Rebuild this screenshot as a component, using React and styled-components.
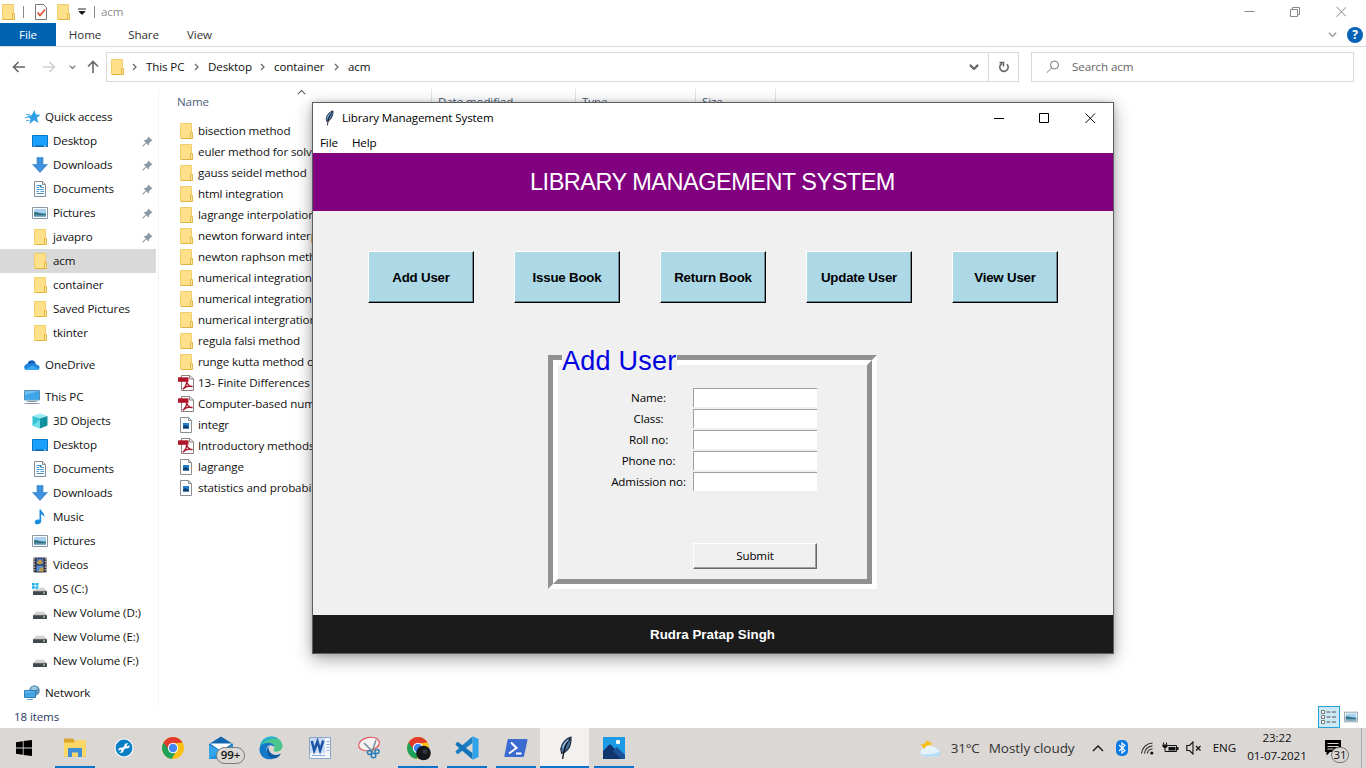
import React from "react";
import styled, { createGlobalStyle } from "styled-components";

const Global = createGlobalStyle`
  * { box-sizing: border-box; }
  body {
    margin: 0;
    overflow: hidden;
    background: #fff;
    font-family: "Open Sans", "Noto Sans", sans-serif;
    font-size: 11.6px;
    letter-spacing: -0.12px;
    color: #111;
  }
  svg { display: block; flex: none; }
`;

/* ---------- icons ---------- */

const Folder = () => (
  <svg width="14" height="16" viewBox="-1 0 14 16">
    <path d="M.5 .5h11v15H.5z" fill="#ffe08a" stroke="#f0cf6a" />
    <path d="M10.5 9.5h2v6h-2z" fill="#ffe596" stroke="#e3b94e" />
    <path d="M1 15.5h11.5" stroke="#dfb545" />
  </svg>
);
const Star = () => (
  <svg width="16" height="16" viewBox="-1 0 16 16">
    <path d="M9.500 1l1.300 4.600 4.700.2-3.700 2.900 1.600 5.200-4.400-2.600L4.500 15l1-5L2 7l4.600-.8z" fill="#2f9fe8" />
    <path d="M1 5.500h4M0 8.500h3M1 11.500h3.500" stroke="#5ab6f0" />
  </svg>
);
const Desk = () => (
  <svg width="16" height="16" viewBox="0 0 16 16">
    <path d="M.5 2.500h15v11H.5z" fill="#18a0fb" stroke="#0a78c8" />
    <path d="M1 13h14" stroke="#0b5fa8" />
    <path d="M2 13h1M12 13h2" stroke="#d6efff" />
  </svg>
);
const Down = () => (
  <svg width="16" height="16" viewBox="0 0 16 16">
    <path d="M5 .5h6v7h4.500L8 15.500.5 7.500H5z" fill="#3f92dc" stroke="#2f7fc8" strokeWidth=".6" />
  </svg>
);
const Doc = () => (
  <svg width="16" height="16" viewBox="0 0 16 16">
    <path d="M2.500 .5h8l3 3v12h-11z" fill="#fff" stroke="#868c92" />
    <path d="M10.500 .5v3h3" fill="none" stroke="#868c92" />
    <path d="M4.500 4.500h3M4.500 6.500h2.500M8.500 6.500h3.500M4.500 8.500h7.500M4.500 10.500h2.500M8.500 10.500h3.500M4.500 12.500h7.500" stroke="#4a9ad4" />
    <path d="M7.500 4h2v2h-2z" fill="#2b78b8" />
  </svg>
);
const Pic = ({ size = 16 }) => (
  <svg width={size} height={size} viewBox="0 0 16 16">
    <path d="M.5 2.500h15v11H.5z" fill="#fff" stroke="#8c969e" />
    <path d="M2 4h12v8H2z" fill="#a9d3f2" />
    <path d="M2 7.500c3-1.500 5 1.500 12 1V12H2z" fill="#38748a" />
    <path d="M2 10.500h12V12H2z" fill="#7cb1ca" />
  </svg>
);
const Cloud = () => (
  <svg width="16" height="16" viewBox="0 0 16 16">
    <path d="M3.500 7a4.300 4.300 0 0 1 8.200-1L7 12.500H3A2.800 2.800 0 0 1 3.500 7z" fill="#0f5cb8" />
    <path d="M7 6.500c3-.8 5.300 0 6 1.600a2.400 2.400 0 0 1 .3 4.900H3.200C1.500 13 .2 12 .2 10.400 0 8.500 2 7 4 7z" fill="#1c84dc" />
    <path d="M1 12l7.500-3.500L15 12c-.5.8-1 1-2 1H3c-1 0-1.500-.4-2-1z" fill="#3aa6f0" />
  </svg>
);
const PC = () => (
  <svg width="16" height="16" viewBox="0 0 16 16">
    <path d="M.5 1.500h15v9.500H.5z" fill="#6cc0f5" stroke="#5a8fb4" />
    <path d="M1 10.500V6L15 2v8.500z" fill="#3fa6ea" />
    <path d="M3 12.500h10M.5 14.500h15" stroke="#8b98a2" />
  </svg>
);
const Cube = () => (
  <svg width="16" height="16" viewBox="0 0 16 16">
    <path d="M8 .5L15.500 3 8 5.500.5 3z" fill="#9be8f0" />
    <path d="M.5 3L8 5.500v10L.5 12.500z" fill="#35c2d4" />
    <path d="M8 5.500L15.500 3v9.500L8 15.500z" fill="#12929f" />
    <path d="M.5 12.500L8 7v8.500z" fill="#6fdde8" />
  </svg>
);
const Note = () => (
  <svg width="16" height="16" viewBox="0 0 16 16">
    <path d="M7.500 .5h1.500c.3 2.500 4 3.500 3.500 8-.7-2-2-2.800-3.300-3V12c0 2-1.500 3.300-3.700 3.300S2.800 14.500 2.800 13s1.700-2.800 4.700-2.300z" fill="#1a8be0" />
  </svg>
);
const Film = () => (
  <svg width="16" height="16" viewBox="0 0 16 16">
    <path d="M1.500 .5h13v15h-13z" fill="#2a2d33" />
    <path d="M2.700 1v15M13.300 1v15" stroke="#e8e8e8" strokeDasharray="1.400 1.400" />
    <path d="M4.500 1.500h7v6h-7z" fill="#4f74c4" />
    <path d="M4.500 8.500h7v6h-7z" fill="#5b8ed8" />
    <path d="M5 5l3-2.500L11 5 9 7H6zM7 13l3-3 1.500 1.500v3H7z" fill="#c89a3a" />
  </svg>
);
const Drive = ({ os }) => (
  <svg width="16" height="16" viewBox="0 0 16 16">
    <path d="M4 6.500h8l3 3.500H1z" fill="#d4d6d8" />
    <path d="M1 10h14v4H1z" fill="#44494d" />
    <path d="M1 10.300h14" stroke="#7a7f84" strokeWidth=".7" />
    <path d="M11 12h2" stroke="#d6f5d8" />
    {os && (
      <g>
        <path d="M-.5 1h8v7h-8z" fill="#fff" />
        <path d="M0 2h2.800v2.500H0zM3.600 2h2.800v2.500H3.600zM0 5.300h2.800v2.500H0zM3.600 5.300h2.800v2.500H3.600z" fill="#1fb0e6" />
      </g>
    )}
  </svg>
);
const Net = () => (
  <svg width="16" height="16" viewBox="0 0 16 16">
    <circle cx="10.500" cy="5.500" r="5.300" fill="#5f93b8" />
    <path d="M7 3.500c2-3 5-2 7 0-2 1-3 3-6 2z" fill="#9fc8de" />
    <path d="M.5 5.500h11v7H.5z" fill="#66bdf0" stroke="#2f7fb4" />
    <path d="M1 12V8l10-2v6z" fill="#43a5e4" />
    <path d="M3 14.500h6" stroke="#5fa9d4" />
  </svg>
);
const Pin = () => (
  <svg width="11" height="11" viewBox="0 0 12 12">
    <path d="M7 .5L11.500 5l-1.300.4-2.500 2.400-.3 2.700L1.500 4.700l2.700-.3L6.600 1.800z" fill="#8c98a4" />
    <path d="M4.500 7.500L.7 11.300" stroke="#8c98a4" strokeWidth="1.200" />
  </svg>
);
const Pdf = () => (
  <svg width="16" height="16" viewBox="0 0 16 16">
    <path d="M3.500 .5h8.500l3.500 3.500v11.500h-12z" fill="#fff" stroke="#8d8080" />
    <path d="M11.500 .5V4h4" fill="none" stroke="#8d8080" />
    <path d="M0 2.300h10.500v4.500H0z" fill="#b1162a" />
    <path d="M8.500 6.500c.3 3-1.500 6-3.700 7.800 2.500-2.500 6.500-3.500 9.700-2.800-2.500.3-5-2-6-5z" fill="none" stroke="#a81a2a" strokeWidth="1.300" />
  </svg>
);
const Img = () => (
  <svg width="12" height="16" viewBox="0 0 12 16">
    <path d="M.5 .5h8l3 3v12H.5z" fill="#fff" stroke="#8b8f94" />
    <path d="M8.500 .5v3h3" fill="none" stroke="#8b8f94" />
    <path d="M3 6h6v5.500H3z" fill="#1d7fd0" />
    <path d="M3 11.500V9.500L5.500 8 9 10v1.500z" fill="#123f70" />
  </svg>
);
const Feather = ({ size = 16 }) => (
  <svg width={size} height={size} viewBox="0 0 16 16">
    <path d="M12 .8C9 1.500 5.800 4.500 5.200 8.500L5.700 11.500l1.900-.5c3.200-2.200 4.700-6 4.400-10.200z" fill="#4a76a6" stroke="#1c2a3a" strokeWidth=".8" />
    <path d="M11.300 2C8.500 5 7.200 9 6.400 15.300" fill="none" stroke="#10151c" strokeWidth=".9" />
    <path d="M10.300 2.500C8.300 4 6.900 6 6.400 8" stroke="#9cc0e0" strokeWidth=".8" fill="none" />
  </svg>
);
const ChevR = () => (
  <svg width="5" height="8" viewBox="0 0 5 8">
    <path d="M1 1l3 3-3 3" fill="none" stroke="#6c6c6c" strokeWidth="1.300" />
  </svg>
);
const ChevD = ({ w = 9, c = "#666", s = 1.6 }) => (
  <svg width={w} height={w * 0.66} viewBox="0 0 9 6">
    <path d="M.8 .8l3.700 3.700L8.200 .8" fill="none" stroke={c} strokeWidth={s} />
  </svg>
);
const Arrow = ({ c, r = 0 }) => (
  <svg width="14" height="14" viewBox="0 0 14 14">
    <path d="M13 7H1.500M6.500 2L1.500 7l5 5" fill="none" stroke={c} strokeWidth="1.600" transform={`rotate(${r} 7 7)`} />
  </svg>
);

const Chrome = ({ dot }) => (
  <svg width="26" height="26" viewBox="-1 0 26 26">
    <circle cx="12" cy="13" r="11" fill="#fbc116" />
    <path d="M12 13L2.500 7.500A11 11 0 0 0 10.500 23.900L16 15z" fill="#1da15b" />
    <path d="M2.500 7.500A11 11 0 0 1 21.500 7.500L12 8.500 8 15z" fill="#e33b2e" />
    <circle cx="12" cy="13" r="5.200" fill="#fff" />
    <circle cx="12" cy="13" r="4.200" fill="#4285f4" />
    {dot && <circle cx="17.500" cy="18" r="7.300" fill="#15171a" />}
    {dot && <circle cx="19" cy="16.500" r="2.500" fill="#33363a" />}
  </svg>
);
const WinLogo = () => (
  <svg width="16" height="16" viewBox="0 0 16 16">
    <path d="M0 2.200l6.800-1v6.400H0zM7.600 1.100L16 0v7.600H7.600zM0 8.400h6.800v6.400L0 13.800zM7.600 8.400H16V16l-8.400-1.100z" fill="#000" />
  </svg>
);
const ExplorerIcon = () => (
  <svg width="22" height="20" viewBox="0 0 22 20">
    <path d="M0 1.500Q0 .5 1 .5h8l2 3H22v15H0z" fill="#dca62a" />
    <path d="M0 4.500h10L12 2h9q1 0 1 1v15.500H0z" fill="#fcd768" />
    <path d="M4 11q0-1 1-1h12q1 0 1 1v8h-4v-4.500H8V19H4z" fill="#3f8fd6" />
  </svg>
);
const Wrench = () => (
  <svg width="20" height="20" viewBox="0 0 20 20">
    <circle cx="10" cy="10" r="9" fill="#087fc4" stroke="#f7fbfd" strokeWidth="1.200" />
    <path d="M7 12.200l6-4.400" stroke="#fff" strokeWidth="2.400" />
    <circle cx="13" cy="7.800" r="2.600" fill="#fff" />
    <circle cx="7" cy="12.200" r="2.600" fill="#fff" />
    <path d="M13 7.800l3.500-2.600M7 12.200l-3.500 2.600" stroke="#087fc4" strokeWidth="1.700" />
  </svg>
);
const Mail = () => (
  <svg width="26" height="24" viewBox="0 0 26 24">
    <path d="M0 8l12-7.500L24 8v15H0z" fill="#1266b0" />
    <path d="M1 7.500h22L12 15z" fill="#fff" />
    <path d="M0 8l12 7 12-7v15H0z" fill="#2290dd" />
    <path d="M0 23V9l11 6z" fill="#35a6ea" />
  </svg>
);
const Edge = () => (
  <svg width="24" height="24" viewBox="0 0 24 24">
    <path d="M1 11C1.500 5 6 .5 12.300 .5 19 .5 23.500 5 23.500 10c0 3.500-2.800 5.700-6 5.700-2 0-3-.7-3-1.500 0-.7 1-1 1-3C15.500 9 13 7 9.500 7 5.500 7 2 9 1 11z" fill="#4bc68a" />
    <path d="M1 11C1.500 5 6 .5 12.300 .5c2.500 0 4.800.6 6.700 2C13 2 5 4 1 11z" fill="#27b3d6" />
    <path d="M.5 12.500C1 9 4.500 6.800 9 6.800c3.500 0 6.500 1.700 6.500 4.500-1-1.300-2.300-2-3.800-2C7 9.500 6.500 14 9 18c1.600 2.700 4 4 6 4.500C7 25.500 0 20 .5 12.500z" fill="#1478c8" />
    <path d="M9.300 10.500C5.500 15 9.500 22.500 15 22.600c2.800-.4 5-1.700 6.500-4.100.4-.7 0-.9-.7-.5-4.800 2.400-11.300.5-11.500-7.500z" fill="#0c59a4" />
  </svg>
);
const Word = () => (
  <svg width="24" height="24" viewBox="0 0 24 24">
    <path d="M1.500 1.500h21v21h-21z" fill="#f4f8fe" stroke="#8ba6c8" />
    <path d="M2 2h15v15H2z" fill="#c9dcf4" />
    <path d="M3.800 5l2.400 9.500L9.500 5.500l2.600 9L15.300 4.500" fill="none" stroke="#1c54a6" strokeWidth="2.500" />
    <path d="M18.500 5.500h3M18.500 8.500h3M18.500 11.500h3M18.500 14.500h3M4 19.500h13" stroke="#8fb0dc" />
  </svg>
);
const Snip = () => (
  <svg width="26" height="24" viewBox="0 0 26 24">
    <ellipse cx="13" cy="8" rx="10.500" ry="6.500" fill="#f6f3f3" stroke="#e05a60" strokeWidth="1.200" transform="rotate(-12 13 8)" />
    <path d="M8 7l9 9M20 4l-4 12" stroke="#7c8c98" strokeWidth="1.500" />
    <circle cx="13.500" cy="16.500" r="2" fill="none" stroke="#2c7fb8" strokeWidth="1.500" />
    <circle cx="17.500" cy="19.500" r="2.300" fill="none" stroke="#2c7fb8" strokeWidth="1.500" />
    <circle cx="21" cy="15.500" r="2" fill="none" stroke="#2c7fb8" strokeWidth="1.500" />
  </svg>
);
const VSCode = () => (
  <svg width="24" height="24" viewBox="0 0 24 24">
    <path d="M17.500 .5v6.500L2.800 18.200.7 16.600v-1.500z" fill="#1c7fc4" />
    <path d="M17.500 23.500V17L2.800 5.800.7 7.400v1.500z" fill="#1473b8" />
    <path d="M17.500 .3l6 2.700v18l-6 2.700z" fill="#2ea3ec" />
  </svg>
);
const Shell = () => (
  <svg width="24" height="20" viewBox="0 0 24 20">
    <path d="M4.500 1h18.200q1 0 .8 1l-3.500 16q-.2 1-1.200 1H1.200q-1 0-.8-1L3.500 2q.2-1 1-1z" fill="#3b6bd0" />
    <path d="M7 4.500l5.500 5.500L5 15.500M12 15.500h5.500" fill="none" stroke="#fff" strokeWidth="2" />
  </svg>
);
const Photos = () => (
  <svg width="22" height="22" viewBox="0 0 22 22">
    <path d="M0 0h22v22H0z" fill="#1d9ae6" />
    <path d="M0 14l7-7 15 15H0z" fill="#10366e" />
    <path d="M10 14l4-4 8 8v4h-4z" fill="#1c5298" />
    <circle cx="15" cy="5" r="2.200" fill="#fff" />
  </svg>
);
const Weather = () => (
  <svg width="23" height="20" viewBox="0 0 23 20">
    <path d="M9 2l1.200 2.600 2.800-.3-1 2.700 2 2-6 5-4-2.500 .2-2.500L1.500 6.500 4.500 6z" fill="#f9bd1a" />
    <path d="M5.500 18.500a4 4 0 0 1 0-8 5.500 5.500 0 0 1 9-1.500 4.500 4.500 0 0 1 4 3 3.300 3.300 0 0 1 0 6.500z" fill="#e4f2fc" />
    <path d="M5.500 18.500c-2 0-3-1-3.600-2.500 5 1.500 14 0 19.300-2.500 1 3-.7 5-2.700 5z" fill="#b4dcf6" />
  </svg>
);
const Bluetooth = () => (
  <svg width="12" height="16" viewBox="0 0 12 16">
    <rect width="12" height="16" rx="5" fill="#0a7be4" />
    <path d="M3 5l6 5.500-3 2.500V3l3 2.500L3 11" fill="none" stroke="#fff" strokeWidth="1.100" />
  </svg>
);
const Wifi = () => (
  <svg width="14" height="14" viewBox="0 0 14 14">
    <g fill="none" stroke="#222" strokeWidth="1.100">
      <path d="M1.500 12.500A11.500 11.500 0 0 1 12.500 2" />
      <path d="M4.500 12.500A8 8 0 0 1 12.500 5" />
      <path d="M7.300 12.500A5 5 0 0 1 12.500 8" />
    </g>
    <circle cx="11.800" cy="12" r="1.600" fill="#111" />
  </svg>
);
const Battery = () => (
  <svg width="17" height="13" viewBox="0 0 17 13">
    <path d="M5.500 3.500h9v6h-10" fill="none" stroke="#111" />
    <path d="M6.500 5h7v3.500h-7zM15 5h1.500v3H15z" fill="#111" />
    <path d="M1.500 .5v2M4.500 .5v2M3 5v4.500h2" fill="none" stroke="#111" />
    <path d="M.5 2.500h5v2L4 6H2L.5 4.500z" fill="#111" />
  </svg>
);
const Mute = () => (
  <svg width="16" height="14" viewBox="0 0 16 14">
    <path d="M.8 4.500h2.700L7 1v12L3.500 9.500H.8z" fill="none" stroke="#111" strokeWidth="1.100" />
    <path d="M10 5l4.500 4.500M14.500 5L10 9.500" stroke="#111" strokeWidth="1.200" />
  </svg>
);
const Notice = () => (
  <svg width="16" height="16" viewBox="0 0 16 16">
    <path d="M0 0h16v12H5l-3.500 3.500V12H0z" fill="#000" />
    <path d="M2.500 3.500h11M2.500 6.500h11M2.500 9h6" stroke="#dbd8d5" />
  </svg>
);

/* ---------- explorer ---------- */

const Screen = styled.div`
  position: relative;
  width: 1366px;
  height: 768px;
  display: flex;
  flex-direction: column;
  overflow: hidden;
  white-space: nowrap;
`;
const TitleRow = styled.div`
  height: 23px;
  display: flex;
  align-items: center;
  padding: 0 20px 0 1px;
  color: #8e8e8e;
`;
const Caption = styled.span`
  padding-bottom: ${(p) => p.$lift || 0}px;
`;
const Divider = styled.i`
  width: 1px;
  height: 12px;
  background: #8a8a8a;
`;
const Gap = styled.span`
  width: ${(p) => p.$w}px;
  flex: none;
`;
const Spacer = styled.span`
  flex: 1;
`;
const Ribbon = styled.div`
  height: 24px;
  display: flex;
  align-items: center;
  border-bottom: 1px solid #d9dadb;
  padding-right: 3px;
`;
const Tab = styled.div`
  height: 23px;
  width: ${(p) => p.$w}px;
  line-height: 23px;
  text-align: center;
  color: ${(p) => (p.$active ? "#fff" : "#333")};
  background: ${(p) => (p.$active ? "#0063b1" : "transparent")};
`;
const HelpDot = styled.span`
  width: 16px;
  height: 16px;
  border-radius: 50%;
  background: #0562b6;
  color: #fff;
  font-weight: 700;
  font-size: 12px;
  line-height: 16px;
  text-align: center;
`;
const NavRow = styled.div`
  height: 42px;
  display: flex;
  align-items: center;
  padding: 0 12px 2px;
  flex: none;
`;
const AddressBox = styled.div`
  width: 913px;
  height: 30px;
  border: 1px solid #d9d9d9;
  display: flex;
  align-items: center;
  padding-left: 3px;
`;
const Crumb = styled.span`
  width: ${(p) => p.$w}px;
  margin-left: 9px;
  padding-bottom: 1px;
`;
const Refresh = styled.span`
  width: 30px;
  height: 28px;
  margin-left: 9px;
  border-left: 1px solid #d9d9d9;
  display: flex;
  align-items: center;
  justify-content: center;
`;
const SearchBox = styled.div`
  width: 323px;
  height: 30px;
  margin-left: 12px;
  border: 1px solid #d9d9d9;
  display: flex;
  align-items: center;
  gap: 12px;
  padding-left: 14px;
  color: #666;
`;
const Main = styled.div`
  height: 617px;
  display: flex;
`;
const Sidebar = styled.div`
  width: 159px;
  padding-top: 16px;
  border-right: 1px solid #f3f3f3;
`;
const SideItem = styled.div`
  height: 24px;
  width: 156px;
  display: flex;
  align-items: center;
  gap: 5px;
  padding: 0 3px 0 ${(p) => (p.$root ? 24 : 32)}px;
  margin-top: ${(p) => (p.$space ? 8 : 0)}px;
  background: ${(p) => (p.$on ? "#d9d9d9" : "transparent")};
`;
const IconCell = styled.span`
  width: 16px;
  display: flex;
  justify-content: center;
`;
const SideLabel = styled.span`
  flex: 1;
  padding-bottom: 2px;
`;
const Files = styled.div`
  flex: 1;
`;
const HeadRow = styled.div`
  height: 31px;
  display: flex;
  align-items: flex-start;
  color: #4c607a;
`;
const HeadCell = styled.div`
  position: relative;
  width: ${(p) => p.$w}px;
  height: 25px;
  line-height: 25px;
  padding-left: ${(p) => p.$pad}px;
  border-right: 1px solid #e5e5e5;
`;
const SortMark = styled.span`
  position: absolute;
  left: 138px;
  top: 0;
  transform: scaleY(-1);
`;
const FileRow = styled.div`
  height: 21px;
  display: flex;
  align-items: center;
  gap: 4px;
  padding-left: 19px;
`;
const StatusBar = styled.div`
  height: 22px;
  display: flex;
  align-items: center;
  padding: 0 8px 0 14px;
  color: #2c3a63;
`;
const ViewToggle = styled.span`
  width: 22px;
  height: 22px;
  border: 1px solid #26a0da;
  background: #cbe8f6;
  display: flex;
  align-items: center;
  justify-content: center;
  margin-right: 4px;
`;

/* ---------- library window ---------- */

const AppWindow = styled.div`
  position: absolute;
  left: 312px;
  top: 102px;
  width: 802px;
  height: 552px;
  border: 1px solid #5e5e5e;
  background: #f0f0f0;
  box-shadow: 0 5px 16px rgba(0, 0, 0, 0.36), 0 0 5px rgba(0, 0, 0, 0.15);
  color: #000;
`;
const WinTitle = styled.div`
  height: 30px;
  background: #fff;
  display: flex;
  align-items: center;
  gap: 5px;
  padding: 0 17px 1px 8px;
`;
const MenuBar = styled.div`
  height: 20px;
  background: #fff;
  display: flex;
  align-items: center;
  gap: 14px;
  padding: 0 0 2px 7px;
`;
const Banner = styled.div`
  height: 58px;
  background: #800080;
  color: #fff;
  display: flex;
  align-items: center;
  justify-content: center;
  font: 23.5px "Liberation Sans", Arial, sans-serif;
  letter-spacing: -0.5px;
  padding-right: 1px;
`;
const Body = styled.div`
  height: 404px;
  padding-top: 40px;
`;
const Actions = styled.div`
  display: flex;
  justify-content: center;
  gap: 40px;
`;
const ActionButton = styled.div`
  width: 106px;
  height: 52px;
  background: #add8e6;
  border: 1px solid;
  border-color: #fff #000 #000 #fff;
  box-shadow: inset -1px -1px 0 #6c8a94;
  display: flex;
  align-items: center;
  justify-content: center;
  font: bold 13.3px "Liberation Sans", Arial, sans-serif;
  letter-spacing: -0.2px;
`;
const Frame = styled.div`
  position: relative;
  width: 329px;
  height: 234px;
  margin: 52px 0 0 235px;
  border: 5px solid;
  border-color: #919191 #fff #fff #919191;
`;
const FrameInner = styled.div`
  height: 224px;
  border: 5px solid;
  border-color: #fff #919191 #919191 #fff;
  padding: 23px 50px 0 48px;
`;
const Legend = styled.span`
  position: absolute;
  left: 9px;
  top: -14px;
  height: 31px;
  line-height: 31px;
  background: #f0f0f0;
  color: #0000e0;
  font-family: "Liberation Sans", Arial, sans-serif;
  font-size: 27px;
  letter-spacing: 0.25px;
`;
const Field = styled.div`
  height: 21px;
  display: grid;
  grid-template-columns: 87px 124px;
  align-items: start;
`;
const FieldLabel = styled.span`
  text-align: center;
  padding-right: 2px;
  line-height: 20px;
`;
const Entry = styled.span`
  height: 19px;
  background: #fff;
  border-top: 1px solid #a0a0a0;
  border-left: 1px solid #a0a0a0;
`;
const Submit = styled.div`
  width: 124px;
  height: 26px;
  margin: 50px 0 0 87px;
  line-height: 24px;
  text-align: center;
  border: 1px solid;
  border-color: #fff #696969 #696969 #fff;
  box-shadow: inset -1px -1px 0 #a0a0a0;
`;
const Footer = styled.div`
  height: 38px;
  background: #1b1b1b;
  color: #fff;
  display: flex;
  align-items: center;
  justify-content: center;
  font: bold 13.3px "Liberation Sans", Arial, sans-serif;
  letter-spacing: 0.05px;
  padding-right: 1px;
`;

/* ---------- taskbar ---------- */

const Taskbar = styled.div`
  height: 40px;
  background: #dad7d4;
  display: flex;
  align-items: stretch;
`;
const Task = styled.div`
  position: relative;
  width: 49px;
  display: flex;
  align-items: center;
  justify-content: center;
  background: ${(p) => (p.$active ? "#f2f1f0" : "transparent")};
  &::after {
    content: "";
    position: absolute;
    bottom: 0;
    left: ${(p) => (p.$active ? 0 : 5)}px;
    right: ${(p) => (p.$active ? 0 : 4)}px;
    height: 2px;
    background: ${(p) => (p.$open || p.$active ? "#0a74cc" : "transparent")};
  }
`;
const Start = styled.div`
  width: 50px;
  padding: 12px 0 0 16px;
`;
const Count = styled.span`
  position: absolute;
  left: 19px;
  top: 19px;
  width: 29px;
  height: 17px;
  border: 1px solid #777;
  border-radius: 9px;
  background: #dad7d4;
  font-size: 11.5px;
  font-weight: 600;
  line-height: 14px;
  text-align: center;
  letter-spacing: 0;
`;
const Tray = styled.div`
  margin-left: auto;
  display: flex;
  align-items: center;
  padding-right: 4px;
`;
const Forecast = styled.span`
  width: ${(p) => p.$w}px;
  font-size: 13.5px;
  color: #333;
  letter-spacing: ${(p) => p.$ls}px;
`;
const Clock = styled.div`
  width: 60px;
  text-align: center;
  line-height: 18px;
  padding-bottom: 2px;
`;
const Bell = styled.div`
  position: relative;
  width: 26px;
  height: 16px;
`;
const BellCount = styled.span`
  position: absolute;
  left: 6px;
  top: 7px;
  width: 18px;
  height: 16px;
  border: 1px solid #777;
  border-radius: 9px;
  background: #dad7d4;
  font-size: 11.5px;
  line-height: 14px;
  text-align: center;
`;
const ShowDesktop = styled.i`
  width: 1px;
  height: 40px;
  margin-left: 10px;
  background: #aaa;
`;

const side = [
  { t: "Quick access", i: <Star />, root: true },
  { t: "Desktop", i: <Desk />, pin: true },
  { t: "Downloads", i: <Down />, pin: true },
  { t: "Documents", i: <Doc />, pin: true },
  { t: "Pictures", i: <Pic />, pin: true },
  { t: "javapro", i: <Folder />, pin: true },
  { t: "acm", i: <Folder />, on: true },
  { t: "container", i: <Folder /> },
  { t: "Saved Pictures", i: <Folder /> },
  { t: "tkinter", i: <Folder /> },
  { t: "OneDrive", i: <Cloud />, root: true, space: true },
  { t: "This PC", i: <PC />, root: true, space: true },
  { t: "3D Objects", i: <Cube /> },
  { t: "Desktop", i: <Desk /> },
  { t: "Documents", i: <Doc /> },
  { t: "Downloads", i: <Down /> },
  { t: "Music", i: <Note /> },
  { t: "Pictures", i: <Pic /> },
  { t: "Videos", i: <Film /> },
  { t: "OS (C:)", i: <Drive os /> },
  { t: "New Volume (D:)", i: <Drive /> },
  { t: "New Volume (E:)", i: <Drive /> },
  { t: "New Volume (F:)", i: <Drive /> },
  { t: "Network", i: <Net />, root: true, space: true },
];

const files = [
  ["bisection method", "d"],
  ["euler method for solvi", "d"],
  ["gauss seidel method", "d"],
  ["html integration", "d"],
  ["lagrange interpolation", "d"],
  ["newton forward interp", "d"],
  ["newton raphson meth", "d"],
  ["numerical integration", "d"],
  ["numerical integration", "d"],
  ["numerical intergration", "d"],
  ["regula falsi method", "d"],
  ["runge kutta method o", "d"],
  ["13- Finite Differences", "p"],
  ["Computer-based num", "p"],
  ["integr", "i"],
  ["Introductory methods", "p"],
  ["lagrange", "i"],
  ["statistics and probabil", "i"],
];
const fileIcon = { d: <Folder />, p: <Pdf />, i: <Img /> };

const tasks = [
  { i: <ExplorerIcon />, open: true },
  { i: <Wrench /> },
  { i: <Chrome /> },
  { i: <Mail />, count: "99+" },
  { i: <Edge /> },
  { i: <Word /> },
  { i: <Snip /> },
  { i: <Chrome dot />, open: true },
  { i: <VSCode />, open: true },
  { i: <Shell />, open: true },
  { i: <Feather size={24} />, active: true },
  { i: <Photos />, open: true },
];

function Explorer() {
  return (
    <>
      <TitleRow>
        <Folder />
        <Gap $w={8} />
        <Divider />
        <Gap $w={11} />
        <svg width="12" height="16" viewBox="0 0 12 16">
          <path d="M.5 .5h8l3 3v12H.5z" fill="#fff" stroke="#777" />
          <path d="M2.500 8.500l2.500 3 5-6" fill="none" stroke="#e0502e" strokeWidth="1.700" />
        </svg>
        <Gap $w={9} />
        <Folder />
        <Gap $w={8} />
        <svg width="8" height="8" viewBox="0 0 8 8">
          <path d="M0 1h8M1 3.500h6L4 6.500z" fill="#111" stroke="#111" strokeWidth=".9" />
        </svg>
        <Gap $w={8} />
        <Divider />
        <Gap $w={6} />
        <Caption>acm</Caption>
        <Spacer />
        <svg width="104" height="12" viewBox="0 0 104 12">
          <g fill="none" stroke="#888">
            <path d="M2.500 5.500h10M48.500 3.500h7v7h-7zM50.500 3.500v-2h7v7h-2M94.500 .8l10 10M104.500 .8l-10 10" />
          </g>
        </svg>
      </TitleRow>
      <Ribbon>
        <Tab $w={56} $active>File</Tab>
        <Tab $w={58}>Home</Tab>
        <Tab $w={59}>Share</Tab>
        <Tab $w={53}>View</Tab>
        <Spacer />
        <ChevD c="#999" s={1.4} />
        <Gap $w={10} />
        <HelpDot>?</HelpDot>
      </Ribbon>
      <NavRow>
        <Arrow c="#666" />
        <Gap $w={16} />
        <Arrow c="#d0d0d0" r={180} />
        <Gap $w={13} />
        <ChevD w={7} c="#777" />
        <Gap $w={10} />
        <Arrow c="#666" r={90} />
        <Gap $w={6} />
        <AddressBox>
          <Folder />
          <Gap $w={8} />
          <ChevR />
          <Crumb $w={48}>This PC</Crumb>
          <ChevR />
          <Crumb $w={52}>Desktop</Crumb>
          <ChevR />
          <Crumb $w={60}>container</Crumb>
          <ChevR />
          <Crumb $w={30}>acm</Crumb>
          <Spacer />
          <ChevD w={10} s={2} />
          <Refresh>
            <svg width="12" height="12" viewBox="0 0 12 12">
              <path d="M9 3.300A4.200 4.200 0 1 1 4 2.500M1.500 1.500h4v4" fill="none" stroke="#666" strokeWidth="1.600" />
            </svg>
          </Refresh>
        </AddressBox>
        <SearchBox>
          <svg width="14" height="14" viewBox="0 0 14 14">
            <circle cx="8.500" cy="5" r="4" fill="none" stroke="#777" />
            <path d="M5.500 8L.8 12.700" stroke="#777" />
          </svg>
          <Caption $lift={1}>Search acm</Caption>
        </SearchBox>
      </NavRow>
      <Main>
        <Sidebar>
          {side.map((s, n) => (
            <SideItem key={n} $root={s.root} $space={s.space} $on={s.on}>
              <IconCell>{s.i}</IconCell>
              <SideLabel>{s.t}</SideLabel>
              {s.pin && <Pin />}
            </SideItem>
          ))}
        </Sidebar>
        <Files>
          <HeadRow>
            <HeadCell $w={273} $pad={18}>
              Name
              <SortMark>
                <ChevD c="#555" s={1.1} />
              </SortMark>
            </HeadCell>
            <HeadCell $w={144} $pad={6}>Date modified</HeadCell>
            <HeadCell $w={120} $pad={6}>Type</HeadCell>
            <HeadCell $w={80} $pad={6}>Size</HeadCell>
          </HeadRow>
          {files.map(([name, kind], n) => (
            <FileRow key={n}>
              <IconCell>{fileIcon[kind]}</IconCell>
              <span>{name}</span>
            </FileRow>
          ))}
        </Files>
      </Main>
      <StatusBar>
        <Caption $lift={2}>18 items</Caption>
        <Spacer />
        <ViewToggle>
          <svg width="16" height="14" viewBox="0 0 16 14">
            <path d="M.5 .5h3v3h-3zM.5 5.500h3v3h-3zM.5 10.500h3v3h-3z" fill="#fff" stroke="#777" />
            <path d="M5.500 2h4M11 2h4M5.500 7h4M11 7h4M5.500 12h4M11 12h4" stroke="#555" />
          </svg>
        </ViewToggle>
        <Pic size={14} />
      </StatusBar>
    </>
  );
}

function LibraryWindow() {
  return (
    <AppWindow>
      <WinTitle>
        <Feather />
        <Caption $lift={1}>Library Management System</Caption>
        <Spacer />
        <svg width="102" height="12" viewBox="0 0 102 12">
          <path d="M0 6.500h10M45.500 1.500h9v9h-9zM91.500 1.500l9.500 9.500M101 1.500L91.500 11" fill="none" stroke="#000" />
        </svg>
      </WinTitle>
      <MenuBar>
        <span>File</span>
        <span>Help</span>
      </MenuBar>
      <Banner>LIBRARY MANAGEMENT SYSTEM</Banner>
      <Body>
        <Actions>
          {["Add User", "Issue Book", "Return Book", "Update User", "View User"].map((t) => (
            <ActionButton key={t}>{t}</ActionButton>
          ))}
        </Actions>
        <Frame>
          <Legend>Add User</Legend>
          <FrameInner>
            {["Name:", "Class:", "Roll no:", "Phone no:", "Admission no:"].map((t) => (
              <Field key={t}>
                <FieldLabel>{t}</FieldLabel>
                <Entry />
              </Field>
            ))}
            <Submit>Submit</Submit>
          </FrameInner>
        </Frame>
      </Body>
      <Footer>Rudra Pratap Singh</Footer>
    </AppWindow>
  );
}

export default function App() {
  return (
    <Screen>
      <Global />
      <Explorer />
      <Taskbar>
        <Start>
          <WinLogo />
        </Start>
        {tasks.map((t, n) => (
          <Task key={n} $open={t.open} $active={t.active}>
            {t.i}
            {t.count && <Count>{t.count}</Count>}
          </Task>
        ))}
        <Tray>
          <Weather />
          <Gap $w={9} />
          <Forecast $w={38} $ls={-0.2}>31°C</Forecast>
          <Forecast $w={103} $ls={-0.05}>Mostly cloudy</Forecast>
          <svg width="12" height="8" viewBox="0 0 12 8">
            <path d="M1 7l5-5 5 5" fill="none" stroke="#111" strokeWidth="1.400" />
          </svg>
          <Gap $w={12} />
          <Bluetooth />
          <Gap $w={12} />
          <Wifi />
          <Gap $w={8} />
          <Battery />
          <Gap $w={7} />
          <Mute />
          <Gap $w={11} />
          <Caption $lift={2}>ENG</Caption>
          <Gap $w={11} />
          <Clock>
            23:22
            <br />
            01-07-2021
          </Clock>
          <Gap $w={18} />
          <Bell>
            <Notice />
            <BellCount>31</BellCount>
          </Bell>
          <ShowDesktop />
        </Tray>
      </Taskbar>
      <LibraryWindow />
    </Screen>
  );
}
